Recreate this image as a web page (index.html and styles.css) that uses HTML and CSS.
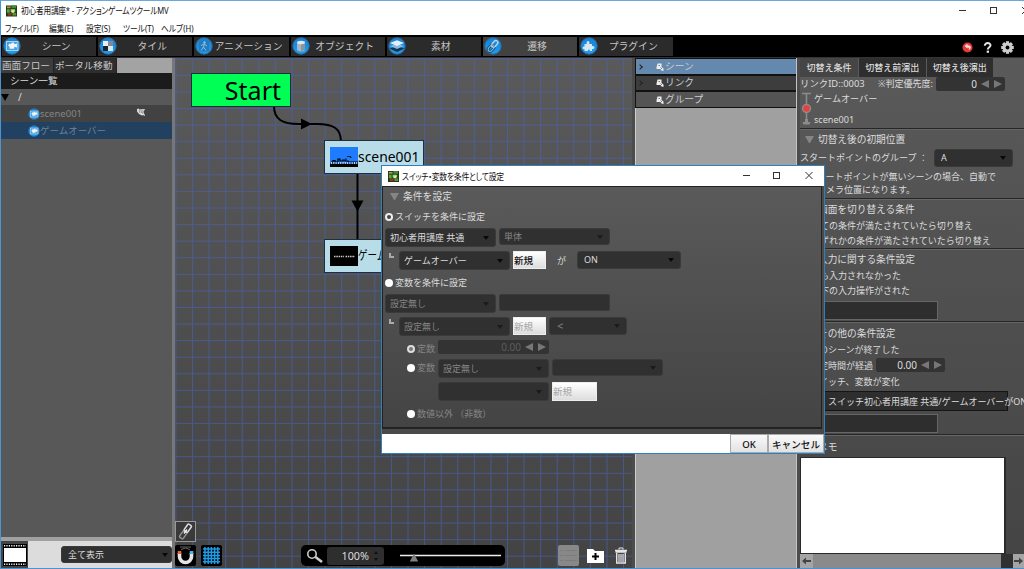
FILE: index.html
```html
<!DOCTYPE html>
<html lang="ja">
<head>
    <meta charset="UTF-8">
    <meta name="viewport" content="width=device-width, initial-scale=1.0">
    <title>初心者用講座* - アクションゲームツクールMV</title>
    <link rel="stylesheet" href="styles.css">
</head>
<body>
    <svg width="0" height="0" class="defs">
        <defs>
            <linearGradient id="ball" x1="0" y1="0" x2="0" y2="1">
                <stop offset="0" stop-color="#1b7fd0"/>
                <stop offset="1" stop-color="#18a0f5"/>
            </linearGradient>
            <symbol id="appicon" viewBox="0 0 12 12">
                <rect width="12" height="12" fill="#1c3a1a"/>
                <rect x="1" y="1" width="4" height="2" fill="#b98a5a"/>
                <rect x="6" y="0" width="5" height="3" fill="#3c8a3c"/>
                <rect x="1" y="4" width="3" height="4" fill="#46b030"/>
                <rect x="5" y="4" width="5" height="3" fill="#8fd050"/>
                <rect x="6" y="5" width="3" height="3" fill="#e8e0b0"/>
                <rect x="2" y="8" width="4" height="3" fill="#8a3a28"/>
                <rect x="7" y="8" width="4" height="3" fill="#58902c"/>
            </symbol>
            <symbol id="cam" viewBox="0 0 18 18">
                <circle cx="9" cy="9" r="8.200" fill="url(#ball)" stroke="#2c6ba5"/>
                <rect x="3.500" y="4.500" width="11.500" height="9" fill="#4d9fd8" stroke="#b5d9f0" stroke-width=".9"/>
                <path d="M5 8.500l1.500-2 1.500.5 1-1.500 2 .3.500 1.400 2.500-.7v4l-2.500-.7-.5 2H6.500v-2z" fill="#eef6fb"/>
            </symbol>
            <symbol id="tag" viewBox="0 0 8 8">
                <path d="M1.500 .5h4V4l2 1.500V8L5.500 7.500 4.500 6H.5V4.500z" fill="#eee"/>
                <path d="M2.500 2.500h1.500M4.500 4.500l1.500 1.500" stroke="#555" stroke-width=".8"/>
            </symbol>
        </defs>
    </svg>

    <div class="window">
        <div class="titlebar">
            <svg class="app-icon" width="11" height="12"><use href="#appicon"/></svg>
            <span class="title-text">初心者用講座* - アクションゲームツクールMV</span>
            <svg class="win-buttons" width="72" height="20" viewBox="0 0 72 20" fill="none" stroke="#333">
                <path d="M7 9.500h7"/>
                <rect x="38.500" y="6.500" width="6" height="6"/>
                <path d="M70 6l7 7M77 6l-7 7"/>
            </svg>
        </div>
        <div class="menubar">
            <span class="m1">ファイル(F)</span>
            <span class="m2">編集(E)</span>
            <span class="m3">設定(S)</span>
            <span class="m4">ツール(T)</span>
            <span class="m5">ヘルプ(H)</span>
        </div>

        <div class="toolbar">
            <div class="tool"><svg width="18" height="18"><use href="#cam"/></svg><span>シーン</span></div>
            <div class="tool">
                <svg width="18" height="18" viewBox="0 0 18 18"><circle cx="9" cy="9" r="8.200" fill="url(#ball)" stroke="#2c6ba5"/><path d="M4 4h5v5H4z" fill="#e8eef2"/><path d="M9 9h5v5H9z" fill="#dfe6ea"/><path d="M9 4h5v5H9z" fill="#7f8a94"/><path d="M4 9h5v5H4z" fill="#1c2430"/></svg>
                <span>タイル</span>
            </div>
            <div class="tool">
                <svg width="18" height="18" viewBox="0 0 18 18"><circle cx="9" cy="9" r="8.200" fill="url(#ball)" stroke="#2c6ba5"/><rect x="4" y="3.500" width="10" height="11" fill="#2b78b5"/><circle cx="9.500" cy="5.500" r="1.200" fill="#74c4f5"/><path d="M9.500 6.500L8.500 10l2.500 3.500M8.500 10L6 13.500M6 8.500l3-1.500 3 2" fill="none" stroke="#74c4f5"/></svg>
                <span>アニメーション</span>
            </div>
            <div class="tool">
                <svg width="18" height="18" viewBox="0 0 18 18"><circle cx="9" cy="9" r="8.200" fill="url(#ball)" stroke="#2c6ba5"/><path d="M5 5.500v7c0 2.500 8 2.500 8 0v-7z" fill="#aab6bf"/><path d="M9 6h4v7l-4 1z" fill="#8796a2"/><ellipse cx="9" cy="5.500" rx="4" ry="1.700" fill="#dfe8ee"/></svg>
                <span>オブジェクト</span>
            </div>
            <div class="tool">
                <svg width="18" height="18" viewBox="0 0 18 18"><circle cx="9" cy="9" r="8.200" fill="url(#ball)" stroke="#2c6ba5"/><path d="M1.500 11.500L9 9l7.500 2.500L9 15z" fill="#18334c"/><path d="M2 9l7-2.500L16 9l-7 3z" fill="#86b9dc"/><path d="M2 6l7-2.800L16 6 9 9z" fill="#e3f0f8"/></svg>
                <span>素材</span>
            </div>
            <div class="tool active">
                <svg width="18" height="18" viewBox="0 0 18 18"><circle cx="9" cy="9" r="8.200" fill="url(#ball)" stroke="#2c6ba5"/><g transform="rotate(-50 9 9)" fill="none"><rect x="2.500" y="7" width="7.500" height="4" rx="2" stroke="#163a5c" stroke-width="2.600"/><rect x="8" y="7" width="7.500" height="4" rx="2" stroke="#b5d6ee" stroke-width="1.500"/><rect x="2.500" y="7" width="7.500" height="4" rx="2" stroke="#7fb4da" stroke-width="1.200"/></g></svg>
                <span>遷移</span>
            </div>
            <div class="tool">
                <svg width="18" height="18" viewBox="0 0 18 18"><circle cx="9" cy="9" r="8.200" fill="url(#ball)" stroke="#2c6ba5"/><path d="M4.500 7h2.300C5.500 3 10.500 3 9.300 7h2.700v2.300c3-1.300 3.500 3.700 0 2.700v2H9.800c.3-2-2-2-1.800 0H4.500v-2c-2.500.5-2.500-2.700 0-2.500z" fill="#d6e6f2"/></svg>
                <span>プラグイン</span>
            </div>
            <svg class="tool-right" width="66" height="21" viewBox="0 0 66 21">
                <circle cx="9.500" cy="12.500" r="5" fill="#e23a35"/>
                <path d="M6.500 11l3-2.300v1.500c4-.2 4.500 3.500 1 5 1-2 .5-2.700-1-2.600v1z" fill="#fbdada"/>
                <path d="M26.800 10.800c0-3.800 6-3.400 5.700-.3-.2 1.800-2.700 1.700-2.700 4" fill="none" stroke="#e4e4e4" stroke-width="2"/>
                <rect x="28.700" y="15.600" width="2.300" height="2.200" fill="#e4e4e4"/>
                <g transform="translate(49.500 12.500)" fill="#cdcdcd"><rect x="-1.600" y="-6.300" width="3.200" height="12.600"/><rect x="-1.600" y="-6.300" width="3.200" height="12.600" transform="rotate(45)"/><rect x="-1.600" y="-6.300" width="3.200" height="12.600" transform="rotate(90)"/><rect x="-1.600" y="-6.300" width="3.200" height="12.600" transform="rotate(135)"/><circle r="4.800"/><circle r="1.900" fill="#000"/></g>
            </svg>
        </div>

        <div class="main">
            <div class="left-panel">
                <div class="left-tabs"><span class="flow-tab">画面フロー</span><span class="portal-tab">ポータル移動</span></div>
                <div class="list-title">シーン一覧</div>
                <div class="tree-root"><span class="tri-down"></span>/</div>
                <div class="tree-item">
                    <svg width="12" height="12"><use href="#cam"/></svg><span>scene001</span>
                    <svg class="flag" width="10" height="9" viewBox="0 0 10 9"><path d="M1 1l2-.5v1l6-.5-1.500 3 1.500 3.500-1 .5-.5-1-1.500.5-3-1.500L1 3.500z" fill="#ddd"/><path d="M3 2l1 3M5 2l.5 3M7 2l-.3 4" stroke="#666" stroke-width=".6"/></svg>
                </div>
                <div class="tree-item selected"><svg width="12" height="12"><use href="#cam"/></svg><span>ゲームオーバー</span></div>
                <div class="tree-space"></div>
                <div class="left-bottom">
                    <div class="film">
                        <svg width="24" height="22" viewBox="0 0 24 22"><rect width="24" height="22" fill="#000"/><rect x="1" y="4" width="22" height="14" fill="#fff"/><path d="M1 1.700h22M1 20.300h22" stroke="#fff" stroke-width="1.600" stroke-dasharray="1.200 1.200"/></svg>
                    </div>
                    <div class="combo all">全て表示</div>
                </div>
            </div>

            <div class="canvas">
                <svg class="grid" width="457" height="510">
                    <defs>
                        <pattern id="cell" x=".400" y=".300" width="16.580" height="16.580" patternUnits="userSpaceOnUse">
                            <path d="M0 .5h16.580M.5 0v16.580" stroke="#4663c0" stroke-opacity=".6" fill="none"/>
                        </pattern>
                    </defs>
                    <rect width="457" height="510" fill="url(#cell)"/>
                    <g fill="none" stroke="#000" stroke-width="2">
                        <path d="M99 48C99 62 108 66 124 66h18c16 0 24 4 24 18"/>
                        <path d="M182.500 114v70"/>
                    </g>
                    <path d="M126 60.500l11 5.500-11 5.500zM176.500 142.500h12l-6 11z"/>
                </svg>
                <div class="node start">Start</div>
                <div class="node scene">
                    <svg width="28" height="20" viewBox="0 0 28 20"><rect width="28" height="20" fill="#1f7cff"/><path d="M0 16.500h28V20H0z"/><path d="M1 15h2v-1.500h2V15h3v-3h2v2h3v-1h2v1h3v1h10" fill="none" stroke="#000" stroke-width="1.200"/><path d="M1 16h26" stroke="#cde" stroke-dasharray="1 1.300" stroke-width="2"/><path d="M17 9.500h4M20 10.500h1.500M15 12h2" stroke="#123"/></svg>
                    <span>scene001</span>
                </div>
                <div class="node over">
                    <svg width="28" height="20" viewBox="0 0 28 20"><rect width="28" height="20"/><path d="M4 10.500h10M15.500 10.500h9.500" stroke="#ccc" stroke-width="1.600" stroke-dasharray="1.500 .8"/></svg>
                    <span>ゲームオーバー</span>
                </div>
                <div class="link-btn">
                    <svg width="19" height="19" viewBox="0 0 19 19" fill="none"><g transform="rotate(-55 9.500 9.500)"><rect x="1.500" y="7.300" width="8" height="4.400" rx="1" stroke="#999" stroke-width="1.300"/><rect x="9.500" y="7.300" width="8" height="4.400" rx="1" stroke="#ddd" stroke-width="1.500"/><path d="M7 9.500h5" stroke="#eee" stroke-width="1.500"/></g></svg>
                </div>
                <div class="canvas-bar">
                    <div class="sq">
                        <svg width="21" height="21" viewBox="0 0 21 21"><path d="M5 2h11M6 4.500q4.500-3 9 0" stroke="#666" fill="none"/><path d="M4.500 8v3.500a6 6 0 0 0 12 0V8" fill="none" stroke="#e4e4e4" stroke-width="3.600"/><path d="M2.700 6h3.600v3H2.700z" fill="#f0623a"/><path d="M14.700 6h3.600v3h-3.600z" fill="#48b6ea"/></svg>
                    </div>
                    <div class="sq">
                        <svg width="21" height="21" viewBox="0 0 21 21" stroke="#1c9be6" stroke-width="1.500"><path d="M2 4h17M2 7.200h17M2 10.400h17M2 13.600h17M2 16.800h17M4 2v17M7.200 2v17M10.400 2v17M13.600 2v17M16.800 2v17"/></svg>
                    </div>
                    <div class="zoombar">
                        <svg width="18" height="16" viewBox="0 0 18 16" fill="none"><circle cx="6" cy="6" r="4.200" stroke="#ccc" stroke-width="1.600"/><path d="M9.500 9l6.500 5" stroke="#ccc" stroke-width="2.600"/></svg>
                        <div class="percent">100%<svg width="6" height="12" viewBox="0 0 6 12" fill="#111"><path d="M1 4l2-3 2 3zM1 8l2 3 2-3z"/></svg></div>
                        <svg class="slider" width="102" height="14" viewBox="0 0 102 14"><path d="M0 6.500h101" stroke="#eee" stroke-width="1.600"/><path d="M14 4.500l4.200 8H9.800z" fill="#808080"/></svg>
                    </div>
                    <div class="list-btn"><svg width="21" height="21" viewBox="0 0 21 21" stroke="#7b7b7b"><path d="M2 5.500h3M7 5.500h12M2 10.500h3M7 10.500h12M2 15.500h3M7 15.500h12"/></svg></div>
                    <svg class="folder" width="17" height="14" viewBox="0 0 17 14"><path d="M0 0h6l2 2h9v12H0z" fill="#fff"/><path d="M8.500 4v7M5 7.500h7" stroke="#000" stroke-width="2"/></svg>
                    <svg width="14" height="17" viewBox="0 0 14 17" fill="none" stroke="#e4e4e4"><path d="M5 2.500V1h4v1.500"/><path d="M1 3.500h12M1.500 5h11" stroke-width="1.300"/><path d="M2.700 6v10h8.600V6" stroke-width="1.400"/><path d="M5 7v8M7 7v8M9 7v8" stroke-width="1.200"/></svg>
                </div>
            </div>

            <div class="group-panel">
                <div class="group-row blue"><i class="chev"></i><svg width="8" height="8"><use href="#tag"/></svg>シーン</div>
                <div class="group-row"><i class="chev"></i><svg width="8" height="8"><use href="#tag"/></svg>リンク</div>
                <div class="group-row light"><i class="chev none"></i><svg width="8" height="8"><use href="#tag"/></svg>グループ</div>
            </div>

            <div class="right-panel">
                <div class="right-tabs"><span class="on">切替え条件</span><span>切替え前演出</span><span>切替え後演出</span></div>
                <div class="link-row">
                    <span class="link-id">リンクID::0003</span><span>※判定優先度:</span>
                    <div class="number">0<b class="al"></b><b class="ar"></b></div>
                </div>
                <div class="link-flow">
                    <svg width="13" height="34" viewBox="0 0 13 34"><path d="M2 1.500h9M6.500 1v27" stroke="#8b8b8b" stroke-width="1.600"/><path d="M2.500 30h2.500v-3h3v3h2.500l-1 2.500h-6z" fill="#8b8b8b"/><circle cx="6.500" cy="16.500" r="4" fill="#e8403c" stroke="#8b8b8b" stroke-width="1.500"/></svg>
                    <div class="link-names"><span>ゲームオーバー</span><span>scene001</span></div>
                </div>
                <div class="section first">
                    <h4><i class="tri"></i>切替え後の初期位置</h4>
                    <div class="group-select">スタートポイントのグループ ：<div class="combo">A</div></div>
                    <p class="note">※スタートポイントが無いシーンの場合、自動で</p>
                    <p class="note second">カメラ位置になります。</p>
                </div>
                <div class="section">
                    <h4>画面を切り替える条件</h4>
                    <p>全ての条件が満たされていたら切り替え</p>
                    <p>いずれかの条件が満たされていたら切り替え</p>
                </div>
                <div class="section input-section">
                    <h4>入力に関する条件設定</h4>
                    <p>何も入力されなかった</p>
                    <p>以下の入力操作がされた</p>
                    <div class="field"></div>
                </div>
                <div class="section other">
                    <h4>その他の条件設定</h4>
                    <p>このシーンが終了した</p>
                    <p class="elapsed">一定時間が経過<span class="number">0.00<b class="al"></b><b class="ar"></b></span></p>
                    <p>スイッチ、変数が変化</p>
                    <div class="cond">スイッチ初心者用講座 共通/ゲームオーバーがON</div>
                    <div class="field"></div>
                </div>
                <div class="section memo">
                    <h4>メモ</h4>
                    <div class="memo-box"></div>
                </div>
                <div class="scroll">
                    <svg width="13" height="13" viewBox="0 0 13 13"><path d="M2 6.500l4-3.500v2.500h5v2H6V10z" fill="#444"/></svg>
                    <div class="track"></div>
                    <div class="corner"></div>
                    <svg width="11" height="13" viewBox="0 0 11 13"><path d="M10 6.500L6 3v2.500H1v2h5V10z" fill="#444"/></svg>
                </div>
            </div>
        </div>
    </div>

    <div class="dialog">
        <div class="dialog-title">
            <svg width="11" height="11"><use href="#appicon"/></svg>
            <span>スイッチ・変数を条件として設定</span>
            <svg class="dialog-buttons" width="74" height="20" viewBox="0 0 74 20" fill="none" stroke="#333"><path d="M1 9.500h7"/><rect x="31.500" y="6.500" width="6" height="6"/><path d="M63.500 6l7 7M70.500 6l-7 7"/></svg>
        </div>
        <div class="dialog-body">
            <div class="d-head"><i class="tri"></i>条件を設定</div>
            <div class="d-radio r1"><i class="radio on"></i>スイッチを条件に設定</div>
            <div class="d-row"><div class="combo">初心者用講座 共通</div><div class="combo short off">単体</div></div>
            <div class="d-row gap4">
                <span class="corner-mark"></span>
                <div class="combo">ゲームオーバー</div>
                <div class="btn">新規</div>
                <span class="ga">が</span>
                <div class="combo on-off short">ON</div>
            </div>
            <div class="d-radio r2"><i class="radio"></i>変数を条件に設定</div>
            <div class="d-row"><div class="combo off">設定無し</div><div class="blank"></div></div>
            <div class="d-row gap4 disabled">
                <span class="corner-mark"></span>
                <div class="combo off">設定無し</div>
                <div class="btn off">新規</div>
                <div class="combo lt off">&lt;</div>
            </div>
            <div class="d-row sub const disabled">
                <div class="d-sub"><i class="radio dot"></i>定数</div>
                <div class="number">0.00<b class="al"></b><b class="ar"></b></div>
            </div>
            <div class="d-row sub var">
                <div class="d-sub"><i class="radio"></i>変数</div>
                <div class="combo off">設定無し</div>
                <div class="combo off short"></div>
            </div>
            <div class="d-row sub var2">
                <div class="d-sub"></div>
                <div class="combo off"></div>
                <div class="btn off wide">新規</div>
            </div>
            <div class="d-row sub last"><i class="radio"></i>数値以外 （非数）</div>
        </div>
        <div class="dialog-foot"><div class="foot-btn ok">OK</div><div class="foot-btn cancel">キャンセル</div></div>
    </div>
</body>
</html>
```
FILE: styles.css
```css
* {
    box-sizing: border-box;
}
body {
    margin: 0;
    width: 1024px;
    height: 569px;
    overflow: hidden;
    position: relative;
    font-family: "Noto Sans", "Noto Sans CJK JP", sans-serif;
    font-size: 9px;
    line-height: 12px;
    color: #dcdcdc;
    background: #505050;
}
.defs {
    position: absolute;
}
svg {
    display: block;
    flex: none;
}
i {
    font-style: normal;
}
.window {
    width: 1024px;
    height: 569px;
    display: flex;
    flex-direction: column;
    border: 1px solid #4a94cf;
    border-top-color: #69a9e0;
    border-right: 0;
    overflow: hidden;
}

/* title and menu */
.titlebar {
    height: 20px;
    background: #fff;
    color: #111;
    display: flex;
    align-items: center;
    padding-left: 5px;
}
.title-text {
    margin-left: 4px;
    font-size: 9.6px;
    font-feature-settings: "palt";
    letter-spacing: -0.25px;
    white-space: nowrap;
    transform: scaleX(0.8);
    transform-origin: left;
}
.win-buttons {
    margin-left: auto;
}
.menubar {
    height: 14px;
    background: #fff;
    color: #111;
    display: flex;
    align-items: center;
    padding-left: 4px;
    padding-top: 1px;
    font-size: 9px;
    font-feature-settings: "palt";
    white-space: nowrap;
}
.menubar span {
    width: 37px;
    transform: scaleX(0.86);
    transform-origin: left;
}
.menubar .m1 {
    width: 44px;
    transform: scaleX(0.82);
}
.menubar .m5 {
    margin-left: 1px;
}

/* toolbar */
.toolbar {
    height: 22px;
    background: #000;
    display: flex;
    gap: 2px;
    padding: 2px 0 2px 1px;
    font-size: 9.8px;
    color: #c4c4c4;
}
.tool {
    width: 94.2px;
    height: 18.500px;
    background: #2b2b2b;
    display: flex;
    align-items: center;
    padding-left: 1px;
}
.tool span {
    flex: 1;
    text-align: center;
    margin-left: -5px;
    padding-top: 1px;
    white-space: nowrap;
}
.tool.active {
    background: #424242;
}
.tool-right {
    margin-left: auto;
    margin-top: -2px;
    margin-right: 0;
}

.main {
    flex: 1;
    display: flex;
    min-height: 0;
    border-top: 1px solid #333;
}

/* left */
.left-panel {
    width: 174px;
    border-right: 3px solid #777;
    display: flex;
    flex-direction: column;
    background: #585858;
}
.left-tabs {
    height: 15px;
    display: flex;
    background: #a3a3a3;
    font-size: 9.6px;
    line-height: 15px;
    white-space: nowrap;
    color: #c8c8c8;
}
.left-tabs span {
    background: #3c3c3c;
    padding-left: 1px;
    border-right: 1px solid #222;
}
.flow-tab {
    width: 53px;
}
.left-tabs .portal-tab {
    width: 63px;
    background: #2e2e2e;
}
.list-title {
    height: 16px;
    background: #1b1b1b;
    padding-left: 9px;
    font-size: 9.6px;
    line-height: 16px;
}
.tree-root {
    height: 16px;
    display: flex;
    align-items: center;
    font-size: 10px;
    gap: 9px;
}
.tri-down {
    border: 4.5px solid transparent;
    border-top: 7px solid #000;
    border-bottom: 0;
}
.tree-item {
    height: 17px;
    background: #424242;
    display: flex;
    align-items: center;
    padding-left: 27px;
    color: #858585;
    font-size: 9.5px;
}
.tree-item .flag {
    margin-left: 54px;
    margin-top: -2px;
}
.tree-item.selected {
    background: #22405f;
    color: #71818f;
}
.tree-space {
    flex: 1;
}
.left-bottom {
    height: 31px;
    border-top: 4px solid #a0a0a0;
    background: #dcdcdc;
    display: flex;
    align-items: center;
    justify-content: space-between;
}
.film {
    width: 27px;
    height: 27px;
    background: #444;
    display: flex;
    align-items: center;
    justify-content: center;
}

/* shared controls */
.combo {
    width: 111px;
    height: 19px;
    background: #303030;
    border: 1px solid #3a3a3a;
    border-radius: 3px;
    padding-left: 4px;
    display: flex;
    align-items: center;
    white-space: nowrap;
    flex: none;
}
.combo::after {
    content: "";
    margin-left: auto;
    margin-right: 6px;
    border: 3px solid transparent;
    border-top: 4px solid #080808;
    border-bottom: 0;
}
.combo.short {
    height: 17px;
}
.combo.off {
    color: #858585;
}
.combo.off::after {
    border-top-color: #1b1b1b;
}
.combo.all {
    height: 17px;
    padding-left: 6px;
}
.combo.all::after {
    margin-right: 3px;
}
.number {
    width: 69px;
    height: 14px;
    background: #333;
    border-radius: 2px;
    display: flex;
    align-items: center;
    justify-content: flex-end;
    padding-right: 3px;
    font-size: 10px;
}
.al, .ar {
    border: 4.5px solid transparent;
    border-left: 0;
    border-right: 8px solid #777;
    margin-left: 4px;
}
.ar {
    border-right: 0;
    border-left: 8px solid #777;
    margin-left: 5px;
}
.tri {
    width: 9px;
    border: 4.5px solid transparent;
    border-top: 7.5px solid #858585;
    border-bottom: 0;
}
.btn {
    width: 33px;
    height: 18px;
    background: linear-gradient(#fff, #ddd);
    border: 1px solid #eee;
    color: #111;
    line-height: 17px;
    font-size: 9.5px;
    font-weight: 500;
    white-space: nowrap;
}
.btn.off {
    color: #a5a5a5;
    font-weight: 400;
}
.btn.wide {
    width: 45px;
    height: 19px;
}

/* flow canvas */
.canvas {
    width: 457px;
    position: relative;
    background: linear-gradient(#5a5a5a, #434343);
}
.grid {
    position: absolute;
    left: 0;
    top: 0;
}
.node {
    position: absolute;
    width: 100px;
    height: 34px;
    background: #b8dde8;
    border: 1px solid #1d3040;
    color: #000;
    display: flex;
    align-items: center;
    font-size: 13.9px;
    overflow: hidden;
    white-space: nowrap;
    padding-left: 5px;
}
.start {
    left: 16px;
    top: 15px;
    background: #00ff55;
    font-size: 25px;
    justify-content: flex-end;
    padding-right: 9px;
}
.scene {
    left: 149px;
    top: 82px;
}
.over {
    left: 149px;
    top: 181px;
}
.over span {
    font-size: 12.5px;
    transform: scaleX(0.76);
    transform-origin: left;
}
.link-btn {
    position: absolute;
    left: 0;
    top: 463px;
    width: 21px;
    height: 21px;
    border: 1px solid #999;
    background: #3a3a3a;
}
.canvas-bar {
    position: absolute;
    left: 0;
    bottom: 2px;
    width: 455px;
    height: 21px;
    display: flex;
    align-items: center;
}
.sq {
    width: 21px;
    height: 21px;
    background: #000;
    border-radius: 2px;
    margin-right: 5px;
}
.zoombar {
    width: 204px;
    height: 21px;
    margin-left: 74px;
    background: #000;
    border-radius: 5px;
    display: flex;
    align-items: center;
    padding-left: 5px;
}
.percent {
    width: 57px;
    height: 18px;
    margin-left: 3px;
    background: #2e2e2e;
    border-radius: 3px;
    display: flex;
    align-items: center;
    justify-content: flex-end;
    gap: 4px;
    padding-right: 5px;
    font-size: 10.8px;
}
.slider {
    margin-left: 16px;
}
.list-btn {
    width: 21px;
    height: 21px;
    margin-left: 53px;
    background: #888;
    border-radius: 2px;
}
.folder {
    margin: 0 10px 0 8px;
}

/* group list */
.group-panel {
    width: 165px;
    border-left: 3px solid #4c4c4c;
    border-right: 1px solid #c4c4c8;
    background: #a0a0a0;
    box-shadow: inset 1px 0 #ccc;
}
.group-row {
    height: 16.500px;
    background: #3d3d3d;
    border: 1px solid #111;
    border-width: 1px 0 1px 1px;
    display: flex;
    align-items: center;
    padding-left: 2px;
    font-size: 9.7px;
    line-height: 14px;
    padding-top: 1px;
    color: #ccc;
}
.chev {
    width: 4px;
    height: 4px;
    margin: 0 14px 0 0;
    border-top: 1px solid #222;
    border-right: 1px solid #222;
    transform: rotate(45deg);
}
.chev.none {
    border: 0;
}
.group-row svg {
    margin-right: 1px;
}
.group-row.blue {
    background: #6588ae;
}
.group-row.light {
    background: #545454;
}

/* right settings */
.right-panel {
    width: 227px;
    border-left: 3px solid #4c4c4c;
    background: linear-gradient(#5a5a5a, #444);
    display: flex;
    flex-direction: column;
    overflow: hidden;
    white-space: nowrap;
}
.right-tabs {
    height: 19px;
    display: flex;
    gap: 1px;
}
.right-tabs span {
    width: 66.500px;
    background: #2e2e2e;
    text-align: center;
    line-height: 19px;
    font-weight: 500;
}
.right-tabs .on {
    width: 58px;
    background: #454545;
}
.link-row {
    height: 14px;
    display: flex;
    align-items: center;
}
.link-id {
    width: 78px;
    font-size: 9.4px;
}
.link-row .number {
    margin-left: 3px;
}
.link-flow {
    height: 37px;
    display: flex;
    align-items: center;
}
.link-names {
    display: flex;
    flex-direction: column;
    gap: 9px;
    margin-left: 1px;
    font-size: 9.1px;
}
.section {
    border-top: 1px solid #262626;
    box-shadow: inset 0 1px #666;
    height: 50px;
}
.section h4 {
    margin: 0;
    height: 19px;
    padding-left: 18px;
    font-size: 9.7px;
    line-height: 21px;
    font-weight: 400;
}
.section p {
    margin: 0;
    height: 15px;
    line-height: 15px;
    padding-left: 11px;
}
.section.first {
    height: 70px;
}
.first h4 {
    display: flex;
    align-items: center;
    padding-left: 5px;
    gap: 4px;
    height: 20px;
    padding-top: 2px;
}
.group-select {
    height: 18px;
    display: flex;
    align-items: center;
}
.group-select .combo {
    width: 79px;
    height: 18px;
    margin-left: auto;
    margin-right: 11px;
    padding-left: 6px;
}
.section .note {
    padding-left: 0;
    height: 12px;
    line-height: 12px;
    margin-top: 4px;
}
.section .second {
    margin-top: 1px;
    padding-left: 17px;
}
.field {
    width: 138px;
    height: 19px;
    background: #2e2e2e;
    border: 1px solid #666;
    margin-top: 3px;
}
.section.input-section {
    height: 74px;
}
.section.other {
    height: 113px;
}
.other h4 {
    line-height: 24px;
}
.other p {
    height: 16px;
    line-height: 17px;
    padding-left: 10px;
}
.other .elapsed {
    display: flex;
    align-items: center;
}
.elapsed .number {
    margin-left: 3px;
}
.cond {
    width: 208px;
    height: 20px;
    margin-top: 2px;
    background: #2e2e2e;
    border: 1px solid #151515;
    padding-left: 27px;
    line-height: 19px;
}
.section.memo {
    flex: 1;
    height: auto;
}
.memo h4 {
    height: 22px;
    line-height: 25px;
}
.memo-box {
    width: 206px;
    height: 97px;
    background: #fff;
    border: 1px solid #2a2a2a;
    border-right-width: 2px;
}
.scroll {
    height: 14px;
    display: flex;
    align-items: center;
    background: #8a8a8a;
}
.scroll svg {
    background: #a5a5a5;
    height: 14px;
}
.track {
    flex: 1;
}
.corner {
    width: 12px;
    height: 14px;
    background: #303030;
}

/* condition dialog */
.dialog {
    position: absolute;
    left: 381px;
    top: 165px;
    width: 444px;
    height: 289px;
    border: 1px solid #2f80bf;
    background: #4a4a4a;
    display: flex;
    flex-direction: column;
}
.dialog-title {
    height: 20px;
    background: #fff;
    color: #111;
    display: flex;
    align-items: center;
    padding-left: 6px;
    font-size: 9.2px;
    font-feature-settings: "palt";
    letter-spacing: -0.3px;
    white-space: nowrap;
}
.dialog-title span {
    margin-left: 3px;
    padding-top: 1px;
    transform: scaleX(0.85);
    transform-origin: left;
}
.dialog-buttons {
    margin-left: auto;
    margin-right: 8px;
}
.dialog-body {
    height: 243px;
    margin-right: 2px;
    border: 1px solid #222;
    border-bottom-width: 2px;
    background: linear-gradient(#5a5a5a, #444);
    padding-left: 2px;
}
.d-head {
    height: 19px;
    display: flex;
    align-items: center;
    gap: 4px;
    padding-left: 5px;
    font-size: 9.8px;
}
.d-radio {
    height: 22px;
    display: flex;
    align-items: center;
    gap: 2px;
}
.radio {
    width: 8px;
    height: 8px;
    border-radius: 50%;
    background: #fff;
    flex: none;
}
.radio.on {
    background: #444;
    border: 2px solid #eee;
}
.radio.dot {
    background: #777;
    border: 2px solid #ddd;
}
.d-row {
    display: flex;
    align-items: flex-start;
    gap: 3px;
    height: 19px;
}
.r2 {
    height: 24px;
    padding-top: 2px;
}
.gap4 {
    margin-top: 4px;
}
.blank {
    width: 111px;
    height: 17px;
    background: #303030;
    border: 1px solid #3a3a3a;
    border-radius: 2px;
}
.corner-mark {
    width: 5px;
    height: 5px;
    border-left: 2px solid #aaa;
    border-bottom: 2px solid #aaa;
    margin: 2px 2px 0 4px;
}
.ga {
    width: 25px;
    padding-left: 8px;
    line-height: 19px;
}
.combo.on-off {
    width: 104px;
    height: 18px;
    padding-left: 6px;
}
.combo.lt {
    width: 78px;
    height: 18px;
    padding-left: 7px;
    font-size: 11px;
}
.sub {
    padding-left: 22px;
    color: #858585;
}
.d-sub {
    width: 28px;
    height: 17px;
    display: flex;
    align-items: center;
    gap: 2px;
    white-space: nowrap;
}
.const {
    margin-top: 4px;
}
.const .number {
    width: 111px;
    color: #5c5c5c;
}
.var2 {
    margin-top: 4px;
}
.last {
    margin-top: 3px;
    align-items: center;
    gap: 2px;
}
.dialog-foot {
    margin-top: auto;
    height: 19px;
    background: #fff;
    display: flex;
    justify-content: flex-end;
}
.foot-btn {
    background: linear-gradient(#fafafa, #e2e2e2);
    border: 1px solid #aaa;
    color: #111;
    text-align: center;
    line-height: 19px;
    font-size: 9.6px;
    font-weight: 500;
    white-space: nowrap;
}
.ok {
    width: 38px;
}
.cancel {
    width: 56px;
}
```
